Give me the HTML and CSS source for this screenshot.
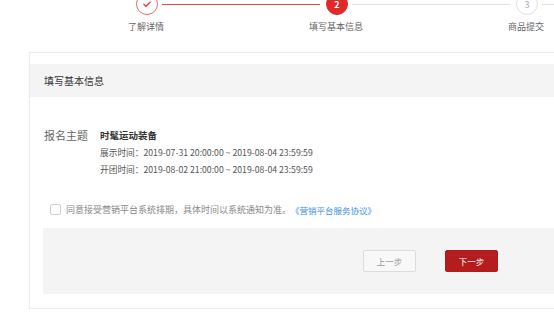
FILE: index.html
```html
<!DOCTYPE html>
<html lang="zh-CN">
<head>
    <meta charset="UTF-8">
    <meta name="viewport" content="width=device-width, initial-scale=1.0">
    <title>填写基本信息</title>
    <link rel="stylesheet" href="styles.css">
</head>
<body>
    <div class="steps">
        <div class="step done">
            <div class="track">
                <span class="line line-in"></span>
                <span class="dot">
                    <svg width="10" height="8" viewBox="0 0 10 8"><polyline points="1.5,4 4,6.3 8.5,1.8" fill="none" stroke="#e23b3b" stroke-width="1.3"/></svg>
                </span>
                <span class="line line-out"></span>
            </div>
            <div class="step-name">了解详情</div>
        </div>
        <div class="step current">
            <div class="track">
                <span class="line line-in"></span>
                <span class="dot">2</span>
                <span class="line line-out"></span>
            </div>
            <div class="step-name">填写基本信息</div>
        </div>
        <div class="step">
            <div class="track">
                <span class="line line-in"></span>
                <span class="dot">3</span>
                <span class="line line-out"></span>
            </div>
            <div class="step-name">商品提交</div>
        </div>
    </div>

    <div class="card">
        <div class="card-title">填写基本信息</div>

        <div class="info-row">
            <div class="info-label">报名主题</div>
            <div class="info-body">
                <div class="theme">时髦运动装备</div>
                <div class="time">展示时间：2019-07-31 20:00:00 ~ 2019-08-04 23:59:59</div>
                <div class="time">开团时间：2019-08-02 21:00:00 ~ 2019-08-04 23:59:59</div>
            </div>
        </div>

        <label class="agree">
            <span class="checkbox"></span>
            <span>同意接受营销平台系统排期，具体时间以系统通知为准。</span>
            <a href="#" class="agree-link">《营销平台服务协议》</a>
        </label>

        <div class="actions">
            <button class="btn btn-prev">上一步</button>
            <button class="btn btn-next">下一步</button>
        </div>
    </div>
</body>
</html>
```

FILE: styles.css
```css
body {
    margin: 0;
    overflow: hidden;
    background: #fff;
    font-family: "Noto Sans CJK SC", "Noto Sans", sans-serif;
    color: #333;
}

/* steps */
.steps {
    display: flex;
    margin-top: -7px;
    padding-left: 51px;
    margin-bottom: 19px;
}

.step {
    flex: 0 0 190px;
}

.track {
    display: flex;
    align-items: center;
    height: 22px;
}

.line {
    flex: 1;
    height: 1px;
    background: #e0e0e0;
}

.line-in {
    margin-right: 6px;
}

.line-out {
    margin-left: 4px;
}

.step.done .line-in {
    background: transparent;
}

.step.done .line-out,
.step.current .line-in {
    background: #e84a4a;
}

.dot {
    box-sizing: border-box;
    width: 22px;
    height: 22px;
    border-radius: 50%;
    border: 1px solid #e0e0e0;
    display: flex;
    align-items: center;
    justify-content: center;
    font-size: 9px;
    line-height: 9px;
    color: #aaa;
    background: #fff;
}

.step.done .dot {
    border-color: #ec6b6b;
}

.step.current .dot {
    border-color: #e02a2a;
    background: #e02a2a;
    color: #fff;
    font-weight: bold;
}

.step-name {
    margin-top: 6px;
    text-align: center;
    font-size: 9px;
    line-height: 12px;
    color: #666;
}

/* card */
.card {
    margin-left: 29px;
    margin-right: -30px;
    padding: 11px 0 14px;
    border: 1px solid #ececec;
    box-shadow: 0 0 2px rgba(0, 0, 0, 0.06);
}

.card-title {
    height: 33px;
    line-height: 33px;
    padding-left: 14px;
    background: #f4f4f4;
    font-size: 10px;
    color: #333;
}

.info-row {
    display: flex;
    padding: 30px 0 0 14px;
}

.info-label {
    width: 56px;
    font-size: 11px;
    line-height: 17px;
    color: #666;
}

.info-body {
    line-height: 17px;
}

.theme {
    font-size: 9.5px;
    font-weight: bold;
    color: #333;
}

.time {
    font-size: 8.7px;
    color: #555;
}

.agree {
    display: flex;
    align-items: center;
    margin-top: 23px;
    padding-left: 20px;
    height: 17px;
    font-size: 9px;
    color: #888;
}

.checkbox {
    box-sizing: border-box;
    width: 11px;
    height: 11px;
    border: 1px solid #d0d0d0;
    border-radius: 2px;
    margin-right: 5px;
    background: #fff;
}

.agree-link {
    font-size: 8.5px;
    color: #3e8fe0;
    text-decoration: none;
}

.actions {
    display: flex;
    align-items: center;
    gap: 29px;
    height: 66px;
    margin: 10px 0 0 13px;
    padding-left: 320px;
    background: #f4f4f4;
}

.btn {
    width: 53px;
    height: 22px;
    padding: 0;
    border-radius: 2px;
    font-family: inherit;
    font-size: 8.5px;
    cursor: pointer;
}

.btn-prev {
    border: 1px solid #dcdcdc;
    background: #f8f8f8;
    color: #999;
}

.btn-next {
    border: 1px solid #b01c1c;
    background: #b31d1d;
    color: #fff;
}
```
